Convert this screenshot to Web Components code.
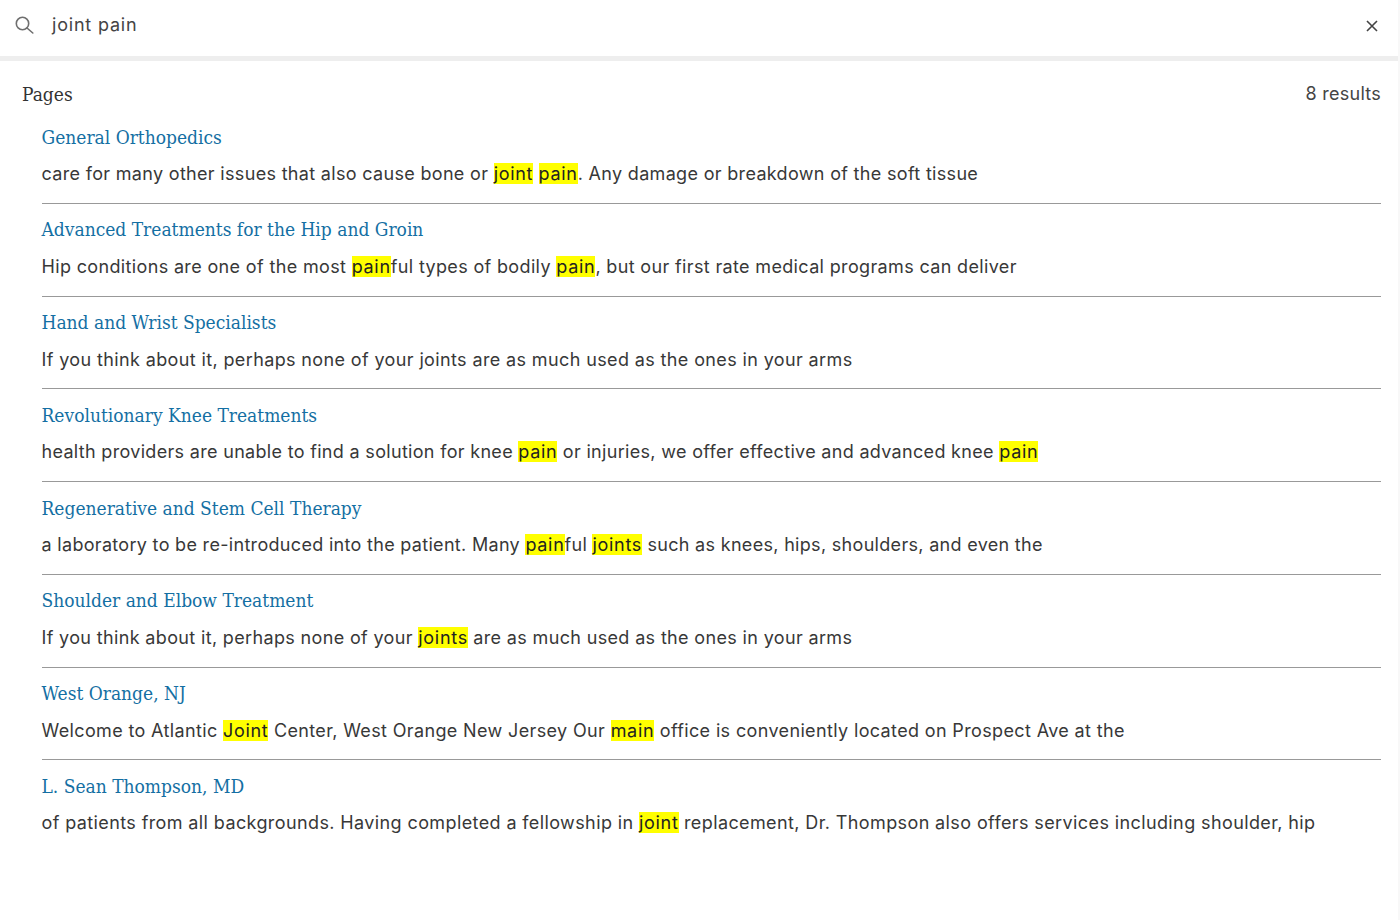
<!DOCTYPE html>
<html><head><meta charset="utf-8"><style>
html,body{margin:0;padding:0;background:#fff;}
body{width:1400px;height:920px;overflow:hidden;}
</style></head><body>
<search-panel>
<search-bar value="joint pain"></search-bar>
<result-group title="Pages" count="8 results">
<result-item style="--ls:.32px" heading="General Orthopedics">care for many other issues that also cause bone or <mark>joint</mark> <mark>pain</mark>. Any damage or breakdown of the soft tissue</result-item>
<result-item style="--ls:.35px" heading="Advanced Treatments for the Hip and Groin">Hip conditions are one of the most <mark>pain</mark>ful types of bodily <mark>pain</mark>, but our first rate medical programs can deliver</result-item>
<result-item style="--ls:.375px" heading="Hand and Wrist Specialists">If you think about it, perhaps none of your joints are as much used as the ones in your arms</result-item>
<result-item style="--ls:.315px" heading="Revolutionary Knee Treatments">health providers are unable to find a solution for knee <mark>pain</mark> or injuries, we offer effective and advanced knee <mark>pain</mark></result-item>
<result-item style="--ls:.31px" heading="Regenerative and Stem Cell Therapy">a laboratory to be re-introduced into the patient. Many <mark>pain</mark>ful <mark>joints</mark> such as knees, hips, shoulders, and even the</result-item>
<result-item style="--ls:.35px" heading="Shoulder and Elbow Treatment">If you think about it, perhaps none of your <mark>joints</mark> are as much used as the ones in your arms</result-item>
<result-item style="--ls:.36px" heading="West Orange, NJ">Welcome to Atlantic <mark>Joint</mark> Center, West Orange New Jersey Our <mark>main</mark> office is conveniently located on Prospect Ave at the</result-item>
<result-item style="--ls:.39px" heading="L. Sean Thompson, MD" last>of patients from all backgrounds. Having completed a fellowship in <mark>joint</mark> replacement, Dr. Thompson also offers services including shoulder, hip</result-item>
</result-group>
</search-panel>
<script>
const SANS='"Inter","Liberation Sans",sans-serif';
const SERIF='"DejaVu Serif Condensed","DejaVu Serif","Liberation Serif",serif';
class SearchPanel extends HTMLElement{constructor(){super();this.attachShadow({mode:'open'}).innerHTML=`<style>:host{display:block;width:1400px;height:920px;box-sizing:border-box;border-right:2px solid #f8f8f8;background:#fff;color:#333;font-family:${SANS}}</style><slot></slot>`;}}
class SearchBar extends HTMLElement{constructor(){super();this.attachShadow({mode:'open'}).innerHTML=`<style>
:host{display:flex;align-items:center;height:56px;padding:0 20px 0 15px;border-bottom:5px solid #eee;box-sizing:content-box;}
.s{width:20px;height:20px;flex:none;margin-top:-6px}
.v{flex:1;margin-left:17px;font:18px/24px ${SANS};letter-spacing:.8px;color:#444;margin-top:-7px}
.x{width:12px;height:12px;flex:none;margin-top:-4px}
</style>
<svg class="s" viewBox="0 0 20 20" fill="none" stroke="#6f6f6f" stroke-width="1.6"><circle cx="7.5" cy="8.5" r="6.2"/><path d="M12 13L17.8 18" stroke-linecap="round"/></svg>
<span class="v"></span>
<svg class="x" viewBox="0 0 12 12" fill="none" stroke="#444" stroke-width="1.6"><path d="M1 1L11 11M11 1L1 11"/></svg>`;
this.shadowRoot.querySelector('.v').textContent=this.getAttribute('value');}}
class ResultGroup extends HTMLElement{constructor(){super();this.attachShadow({mode:'open'}).innerHTML=`<style>
:host{display:block;padding:20px 17px 0 22px}
header{display:flex;justify-content:space-between;align-items:center;height:26px;margin-bottom:4px}
.t{font:19px/26px ${SERIF};color:#333}
.c{font:18px/26px ${SANS};letter-spacing:.25px;color:#444;margin-top:-1px}
.list{padding-left:19.5px}
</style><header><span class="t"></span><span class="c"></span></header><div class="list"><slot></slot></div>`;
this.shadowRoot.querySelector('.t').textContent=this.getAttribute('title');
this.shadowRoot.querySelector('.c').textContent=this.getAttribute('count');
this.removeAttribute('title');}}
class ResultItem extends HTMLElement{constructor(){super();this.attachShadow({mode:'open'}).innerHTML=`<style>
:host{display:block;height:92.75px;box-sizing:border-box;border-bottom:1px solid #999;padding-top:11.5px}
:host([last]){border-bottom:0}
.h{font:19px/28px ${SERIF};color:#146fa3;height:28px;white-space:nowrap}
.b{font:18px/28px ${SANS};letter-spacing:var(--ls,.37px);color:#383838;margin-top:9.5px;white-space:nowrap}
::slotted(mark){background:#ff0;color:#222;letter-spacing:.7px}
</style><div class="h"></div><div class="b"><slot></slot></div>`;
this.shadowRoot.querySelector('.h').textContent=this.getAttribute('heading');}}
customElements.define('search-panel',SearchPanel);
customElements.define('search-bar',SearchBar);
customElements.define('result-group',ResultGroup);
customElements.define('result-item',ResultItem);
</script>
</body></html>
